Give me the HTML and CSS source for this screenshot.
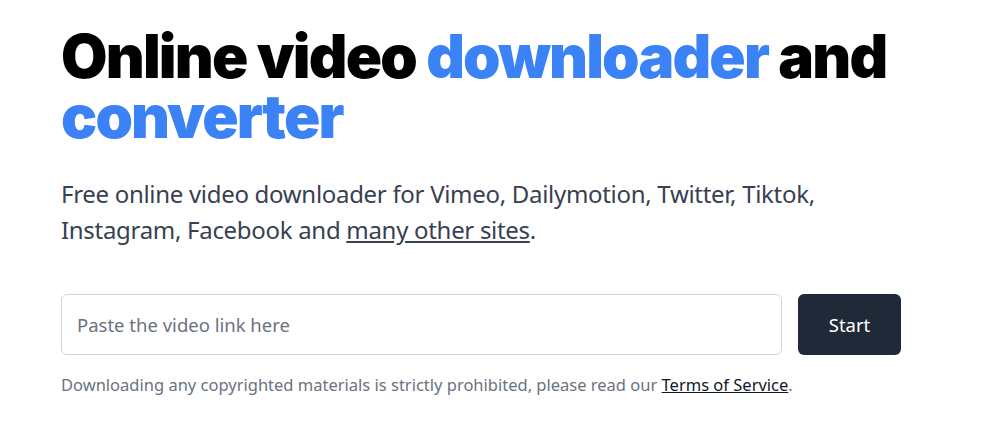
FILE: index.html
```html
<!DOCTYPE html>
<html>
<head>
<meta charset="utf-8">
<link rel="stylesheet" href="styles.css">
</head>
<body>
<main class="hero">
  <h1 class="title">Online video <span class="accent">downloader</span> and <span class="accent">converter</span></h1>
  <p class="lead">Free online video downloader for Vimeo, Dailymotion, Twitter, Tiktok, Instagram, Facebook and <a class="lead-link" href="#">many other sites</a>.</p>
  <form class="search">
    <input class="search-input" type="text" placeholder="Paste the video link here">
    <button class="search-btn" type="button">Start</button>
  </form>
  <p class="note">Downloading any copyrighted materials is strictly prohibited, please read our <a class="note-link" href="#">Terms of Service</a>.</p>
</main>
</body>
</html>
```
FILE: styles.css
```css
* { box-sizing: border-box; }
html, body { margin: 0; padding: 0; background: #fff; }
body { font-family: "Noto Sans", "Open Sans", sans-serif; }
.hero { padding: 26px 0 0 61px; width: 901px; }
.title {
  margin: 0 -40px 0 0;
  font-family: Inter, "Noto Sans", sans-serif;
  font-weight: 900;
  font-size: 60px;
  line-height: 60px;
  color: #000;
  letter-spacing: -1.8px;
}
.accent { color: #3b82f6; }
.lead {
  margin: 30px 0 0;
  font-size: 24px;
  line-height: 36px;
  color: #374151;
  letter-spacing: -0.3px;
}
.lead-link { color: #374151; text-decoration: underline; }
.search { display: flex; gap: 16px; margin-top: 46px; }
.search-input {
  flex: 1;
  height: 61px;
  border: 1px solid #d1d5db;
  border-radius: 6px;
  padding: 0 15px;
  font-family: inherit;
  font-size: 18.5px;
  color: #374151;
}
.search-input::placeholder { color: #6b7280; }
.search-btn {
  width: 103px;
  height: 61px;
  border: 0;
  border-radius: 6px;
  background: #1f2937;
  color: #fff;
  font-family: inherit;
  font-size: 18.5px;
}
.note { margin: 18px 0 0; font-size: 16.5px; line-height: 24px; color: #6b7280; }
.note-link { color: #111827; text-decoration: underline; }
```
